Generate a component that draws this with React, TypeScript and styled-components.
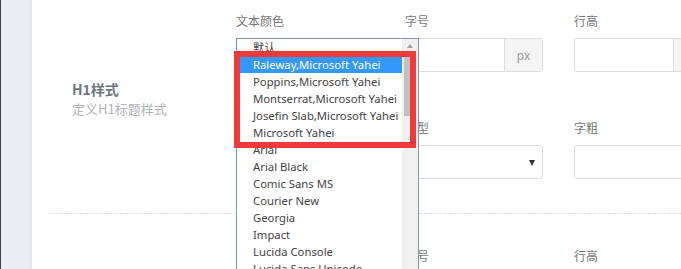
import styled, { createGlobalStyle } from "styled-components";

const GlobalStyle = createGlobalStyle`
  html, body {
    margin: 0;
    padding: 0;
    height: 100%;
    overflow: hidden;
    background: #fff;
  }
  body {
    font-family: "Noto Sans", "Noto Sans CJK SC", sans-serif;
  }
  #root {
    height: 100%;
  }
`;

const Page = styled.div`
  display: flex;
  height: 100%;
`;

const Sidebar = styled.div`
  width: 31px;
  flex-shrink: 0;
  background: #e9ecf0;
  border-left: 1px solid #3d4247;
  box-shadow: inset -5px 0 5px -3px rgba(0, 0, 0, 0.04);
`;

const Main = styled.div`
  flex: 1;
  overflow: hidden;
`;

// the view is scrolled a little into the list of sections
const Scroller = styled.div`
  margin-top: -21px;
`;

const Section = styled.div`
  display: flex;
  margin-left: 18px;
  padding: 33px 0 34px;
  border-bottom: 1px dashed #dcdcdc;
`;

const TitleCol = styled.div`
  width: 164px;
  padding: 67px 0 0 22px;
  flex-shrink: 0;
`;

const Title = styled.div`
  font-size: 14px;
  line-height: 20px;
  font-weight: bold;
  color: #6d7780;
  font-family: "Noto Sans CJK SC", sans-serif;
`;

const Desc = styled.div`
  font-size: 13px;
  line-height: 20px;
  color: #b0b4b8;
  font-family: "Noto Sans CJK SC", sans-serif;
`;

const FormGrid = styled.div`
  display: grid;
  grid-template-columns: repeat(3, 138px);
  column-gap: 31px;
  row-gap: 47px;
`;

const Field = styled.div`
  display: flex;
  flex-direction: column;
`;

const Label = styled.div`
  font-size: 12px;
  line-height: 17px;
  color: #777;
  margin-bottom: 9px;
  font-family: "Noto Sans CJK SC", sans-serif;
`;

const InputGroup = styled.div`
  display: flex;
  height: 34px;
  box-sizing: border-box;
  border: 1px solid #ddd;
  border-radius: 3px;
  overflow: hidden;
`;

const InputArea = styled.div`
  flex: 1;
`;

const Addon = styled.div`
  width: 37px;
  display: flex;
  align-items: center;
  justify-content: center;
  background: #f5f5f5;
  border-left: 1px solid #ddd;
  font-size: 12px;
  color: #999;
`;

const SelectWrap = styled.div`
  position: relative;
`;

const SelectBox = styled.div`
  position: relative;
  height: 34px;
  box-sizing: border-box;
  border: 1px solid #ddd;
  border-radius: 3px;
  padding-left: 16px;
  font-size: 13px;
  line-height: 32px;
  color: #333;
`;

const Caret = styled.span`
  position: absolute;
  right: 7px;
  top: 14px;
  width: 0;
  height: 0;
  border-left: 3.5px solid transparent;
  border-right: 3.5px solid transparent;
  border-top: 6px solid #333;
`;

const Popup = styled.div`
  position: absolute;
  top: 0;
  left: 0;
  width: 183px;
  height: 250px;
  box-sizing: border-box;
  display: flex;
  background: #fff;
  border: 1px solid #8295b0;
  z-index: 10;
`;

const OptionList = styled.div`
  flex: 1;
  min-width: 0;
`;

const Option = styled.div<{ $active?: boolean }>`
  height: 17px;
  line-height: 17px;
  padding-left: 16px;
  font-size: 11.3px;
  white-space: nowrap;
  overflow: hidden;
  font-family: "Noto Sans", "Noto Sans CJK SC", sans-serif;
  color: ${({ $active }) => ($active ? "#fff" : "#444")};
  background: ${({ $active }) => ($active ? "#3399ff" : "transparent")};
`;

const ScrollTrack = styled.div`
  position: relative;
  width: 16px;
  flex-shrink: 0;
  background: #f0f0f0;
`;

const ScrollUp = styled.span`
  position: absolute;
  left: 5px;
  top: 5px;
  width: 0;
  height: 0;
  border-left: 3px solid transparent;
  border-right: 3px solid transparent;
  border-bottom: 4px solid #a3a3a3;
`;

const ScrollThumb = styled.div`
  position: absolute;
  left: 2px;
  right: 2px;
  top: 17px;
  height: 60px;
  background: #c1c1c1;
`;

const Highlight = styled.div`
  position: absolute;
  left: -3px;
  top: 12px;
  width: 182px;
  height: 97px;
  box-sizing: border-box;
  border: 6px solid #f03a3c;
  z-index: 11;
  pointer-events: none;
`;

const fonts = [
  "默认",
  "Raleway,Microsoft Yahei",
  "Poppins,Microsoft Yahei",
  "Montserrat,Microsoft Yahei",
  "Josefin Slab,Microsoft Yahei",
  "Microsoft Yahei",
  "Arial",
  "Arial Black",
  "Comic Sans MS",
  "Courier New",
  "Georgia",
  "Impact",
  "Lucida Console",
  "Lucida Sans Unicode",
];

function UnitInput() {
  return (
    <InputGroup>
      <InputArea />
      <Addon>px</Addon>
    </InputGroup>
  );
}

function FontPopup() {
  return (
    <Popup>
      <OptionList>
        {fonts.map((f, i) => (
          <Option key={f} $active={i === 1}>
            {f}
          </Option>
        ))}
      </OptionList>
      <ScrollTrack>
        <ScrollUp />
        <ScrollThumb />
      </ScrollTrack>
      <Highlight />
    </Popup>
  );
}

function StyleSection({
  title,
  desc,
  open,
}: {
  title: string;
  desc: string;
  open?: boolean;
}) {
  return (
    <Section>
      <TitleCol>
        <Title>{title}</Title>
        <Desc>{desc}</Desc>
      </TitleCol>
      <FormGrid>
        <Field>
          <Label>文本颜色</Label>
          <SelectWrap>
            <SelectBox>默认</SelectBox>
            {open && <FontPopup />}
          </SelectWrap>
        </Field>
        <Field>
          <Label>字号</Label>
          <UnitInput />
        </Field>
        <Field>
          <Label>行高</Label>
          <UnitInput />
        </Field>
        <Field>
          <Label>字体</Label>
          <SelectBox>
            默认
            <Caret />
          </SelectBox>
        </Field>
        <Field>
          <Label>字型</Label>
          <SelectBox>
            <Caret />
          </SelectBox>
        </Field>
        <Field>
          <Label>字粗</Label>
          <InputGroup>
            <InputArea />
          </InputGroup>
        </Field>
      </FormGrid>
    </Section>
  );
}

export default function App() {
  return (
    <>
      <GlobalStyle />
      <Page>
        <Sidebar />
        <Main>
          <Scroller>
            <StyleSection title="H1样式" desc="定义H1标题样式" open />
            <StyleSection title="H2样式" desc="定义H2标题样式" />
          </Scroller>
        </Main>
      </Page>
    </>
  );
}
